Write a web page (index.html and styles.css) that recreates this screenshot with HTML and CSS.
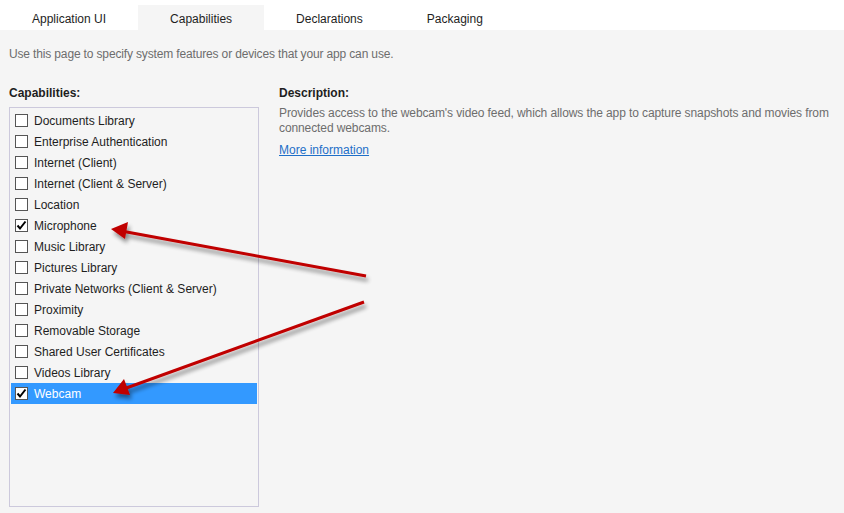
FILE: index.html
```html
<!DOCTYPE html>
<html>
<head>
<meta charset="utf-8">
<link rel="stylesheet" href="styles.css">
</head>
<body>
<div class="page">
  <nav class="tabs">
    <div class="tab">Application UI</div>
    <div class="tab active">Capabilities</div>
    <div class="tab">Declarations</div>
    <div class="tab">Packaging</div>
  </nav>
  <p class="intro">Use this page to specify system features or devices that your app can use.</p>
  <div class="content">
    <section class="left">
      <h2 class="label">Capabilities:</h2>
      <ul class="list">
        <li class="item"><span class="box"></span><span>Documents Library</span></li>
        <li class="item"><span class="box"></span><span>Enterprise Authentication</span></li>
        <li class="item"><span class="box"></span><span>Internet (Client)</span></li>
        <li class="item"><span class="box"></span><span>Internet (Client &amp; Server)</span></li>
        <li class="item"><span class="box"></span><span>Location</span></li>
        <li class="item"><span class="box checked"><svg viewBox="0 0 11 11" width="11" height="11"><path d="M1.5 5.5 L4 8.5 L9.5 1.5" fill="none" stroke="#000" stroke-width="2"/></svg></span><span>Microphone</span></li>
        <li class="item"><span class="box"></span><span>Music Library</span></li>
        <li class="item"><span class="box"></span><span>Pictures Library</span></li>
        <li class="item"><span class="box"></span><span>Private Networks (Client &amp; Server)</span></li>
        <li class="item"><span class="box"></span><span>Proximity</span></li>
        <li class="item"><span class="box"></span><span>Removable Storage</span></li>
        <li class="item"><span class="box"></span><span>Shared User Certificates</span></li>
        <li class="item"><span class="box"></span><span>Videos Library</span></li>
        <li class="item selected"><span class="box checked"><svg viewBox="0 0 11 11" width="11" height="11"><path d="M1.5 5.5 L4 8.5 L9.5 1.5" fill="none" stroke="#000" stroke-width="2"/></svg></span><span>Webcam</span></li>
      </ul>
    </section>
    <section class="right">
      <h2 class="label">Description:</h2>
      <p class="desc">Provides access to the webcam's video feed, which allows the app to capture snapshots and movies from connected webcams.</p>
      <a class="more" href="#">More information</a>
    </section>
  </div>
  <svg class="arrows" width="844" height="513" viewBox="0 0 844 513">
    <defs>
      <filter id="sh" x="-20%" y="-50%" width="140%" height="200%">
        <feGaussianBlur in="SourceAlpha" stdDeviation="2"/>
        <feOffset dx="2" dy="4" result="b"/>
        <feComponentTransfer><feFuncA type="linear" slope="0.45"/></feComponentTransfer>
        <feMerge><feMergeNode/><feMergeNode in="SourceGraphic"/></feMerge>
      </filter>
    </defs>
    <g filter="url(#sh)" fill="#c00000" stroke="#c00000">
      <line x1="366" y1="276" x2="124" y2="231.5" stroke-width="3"/>
      <polygon points="111,229 128,222 125,239" stroke="none"/>
      <line x1="364" y1="302" x2="125" y2="388.5" stroke-width="3"/>
      <polygon points="113,393 124,379 130,395" stroke="none"/>
    </g>
  </svg>
</div>
</body>
</html>
```
FILE: styles.css
```css
* { box-sizing: border-box; }
html, body { margin: 0; padding: 0; }
body {
  background: #f5f5f5;
  font-family: "Liberation Sans", Arial, sans-serif;
  font-size: 12px;
  color: #1e1e1e;
}
.page {
  position: relative;
  width: 844px;
  height: 513px;
  overflow: hidden;
}
.tabs {
  display: flex;
  align-items: flex-end;
  height: 30px;
  background: #ffffff;
}
.tab {
  height: 25px;
  padding: 3px 32px 0;
  line-height: 22px;
  color: #1e1e1e;
  white-space: nowrap;
}
.tab.active { background: #f5f5f5; }
.intro {
  margin: 0;
  padding: 17px 9px 0;
  height: 46px;
  color: #6d6d6d;
  line-height: 15px;
  letter-spacing: -0.15px;
}
.content {
  display: flex;
  gap: 20px;
  padding: 0 9px;
}
.left { width: 250px; flex: none; }
.right { flex: 1; }
.label {
  margin: 0;
  height: 31px;
  padding-top: 10px;
  font-size: 12px;
  font-weight: bold;
  line-height: 15px;
  color: #1e1e1e;
}
.list {
  list-style: none;
  margin: 0;
  height: 400px;
  padding: 2px 1px;
  border: 1px solid #ccc9dc;
}
.item {
  display: flex;
  align-items: center;
  height: 21px;
  padding-left: 4px;
  gap: 6px;
  white-space: nowrap;
}
.item.selected { background: #3399ff; color: #ffffff; }
.box {
  width: 13px;
  height: 13px;
  flex: none;
  border: 1px solid #555555;
  background: #ffffff;
  display: flex;
  align-items: center;
  justify-content: center;
}
.box svg { display: block; }
.right .label { height: 30px; }
.desc {
  margin: 0;
  color: #6d6d6d;
  line-height: 15px;
  letter-spacing: -0.1px;
}
.more {
  display: inline-block;
  margin-top: 7px;
  color: #1e6fc8;
  text-decoration: underline;
  line-height: 15px;
}
.arrows {
  position: absolute;
  left: 0;
  top: 0;
  pointer-events: none;
}
```
